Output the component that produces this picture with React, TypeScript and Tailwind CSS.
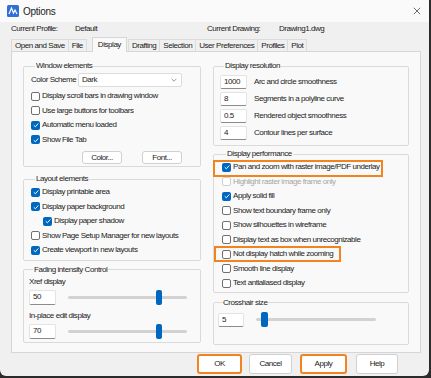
import React from 'react';

type CheckProps = {
    label: string;
    on?: boolean;
    dis?: boolean;
    indent?: boolean;
    mark?: 'first' | 'second';
};

const Box: React.FC<{ on?: boolean; dis?: boolean }> = ({ on, dis }) => {
    if (on) {
        return (
            <span className="w-[9px] h-[9px] shrink-0 rounded-[2px] bg-[#0067c0] flex items-center justify-center">
                <svg viewBox="0 0 10 10" className="w-[8px] h-[8px]">
                    <path d="M2.2 5.3 L4.2 7.2 L7.9 3.1" stroke="white" strokeWidth="1.2" fill="none" />
                </svg>
            </span>
        );
    }
    return (
        <span
            className={`w-[9px] h-[9px] shrink-0 rounded-[2px] border bg-white ${dis ? 'border-[#d0d0d0]' : 'border-[#707070]'}`}
        />
    );
};

const Check: React.FC<CheckProps> = ({ label, on, dis, indent, mark }) => (
    <div className={`relative h-[14.5px] flex items-center gap-[2px] whitespace-nowrap ${indent ? 'pl-[12px]' : ''}`}>
        <Box on={on} dis={dis} />
        <span className={dis ? 'text-[#a6a6a6]' : ''}>{label}</span>
        {mark === 'first' && (
            <span className="absolute left-[-9px] top-0 w-[170px] h-[17px] border-2 border-[#f2841f]" />
        )}
        {mark === 'second' && (
            <span className="absolute left-[-8px] top-[-1px] w-[127px] h-[16px] border-2 border-[#f2841f]" />
        )}
    </div>
);

const Group: React.FC<{ title: string; className?: string; children: React.ReactNode }> = ({ title, className, children }) => (
    <fieldset className={`border border-[#dadada] rounded-[2px] ${className ?? ''}`}>
        <legend className="ml-[4px] px-[1px] h-[10px] leading-[10px]">{title}</legend>
        {children}
    </fieldset>
);

const Field: React.FC<{ value: string; w: string }> = ({ value, w }) => (
    <div className={`${w} h-[14px] bg-white border border-[#e3e3e3] border-b-[#8c8c8c] rounded-[2px] pl-[3px] flex items-center`}>
        {value}
    </div>
);

const Slider: React.FC<{ track: string; thumb: string }> = ({ track, thumb }) => (
    <div className={`relative ${track} h-[3px] bg-[#d2d2d2] rounded-full`}>
        <span className={`absolute top-[-6px] ${thumb} w-[6px] h-[15px] rounded-[2px] bg-[#0067c0]`} />
    </div>
);

const Btn: React.FC<{ label: string; w: string; mark?: boolean }> = ({ label, w, mark }) => (
    <div
        className={`${w} h-[20px] rounded-[3px] bg-white flex items-center justify-center ${mark ? 'border-2 border-[#f2841f]' : 'border border-[#d0d0d0]'}`}
    >
        {label}
    </div>
);

const tabs = ['Open and Save', 'File', 'Display', 'Drafting', 'Selection', 'User Preferences', 'Profiles', 'Plot'];

export default function App() {
    return (
        <div className="w-[431px] h-[378px] bg-[#2b2b2b] overflow-hidden font-['Liberation_Sans',Arial,sans-serif] text-[8px] tracking-[-0.45px] text-[#1b1b1b]">
            <div className="w-[429px] h-[376px] bg-[#f0f0f0] rounded-b-[6px] flex flex-col">
                {/* title bar */}
                <div className="h-[22px] bg-[#fafafa] flex items-center pl-[7px] pr-[8px]">
                    <svg viewBox="0 0 12 12" className="w-[12px] h-[12px]">
                        <rect width="12" height="12" rx="1.5" fill="#2f6fd8" />
                        <path d="M2 9 L4.5 3 L6.5 8 L8 5 L10 9" stroke="white" strokeWidth="1.2" fill="none" />
                    </svg>
                    <span className="ml-[4px] text-[10px] tracking-[-0.3px]">Options</span>
                    <svg viewBox="0 0 10 10" className="ml-auto w-[8px] h-[8px]">
                        <path d="M1 1 L9 9 M9 1 L1 9" stroke="#333" strokeWidth="0.9" />
                    </svg>
                </div>

                {/* profile row */}
                <div className="mt-[2px] h-[10px] leading-[10px] flex pl-[11px] whitespace-nowrap">
                    <span className="w-[64px]">Current Profile:</span>
                    <span className="w-[132px]">Default</span>
                    <span className="w-[72px]">Current Drawing:</span>
                    <span>Drawing1.dwg</span>
                </div>

                {/* tabs */}
                <div className="mt-[2px] h-[15px] flex items-end pl-[12px] whitespace-nowrap">
                    {tabs.map((t) =>
                        t === 'Display' ? (
                            <div
                                key={t}
                                className="h-[15px] ml-[5px] mr-[2px] px-[5px] bg-[#f9f9f9] border border-b-0 border-[#d6d6d6] flex items-center relative top-[1px] z-10"
                            >
                                {t}
                            </div>
                        ) : (
                            <div key={t} className="h-[12px] px-[3px] border border-b-0 border-[#dcdcdc] -ml-px flex items-center">
                                {t}
                            </div>
                        ),
                    )}
                </div>

                {/* panel */}
                <div className="ml-[11px] w-[410px] h-[302px] bg-[#f9f9f9] border border-[#d6d6d6] pt-[9px] pl-[11px] grid grid-cols-[178px_196px] gap-x-[12px] items-start">
                    {/* left column */}
                    <div className="flex flex-col">
                        <Group title="Window elements" className="px-[7px] pb-[2px]">
                            <div className="mt-[2px] flex items-center">
                                <span className="w-[47px]">Color Scheme</span>
                                <div className="w-[104px] h-[14px] bg-white border border-[#dcdcdc] rounded-[2px] flex items-center pl-[3px] pr-[4px]">
                                    <span>Dark</span>
                                    <svg viewBox="0 0 10 6" className="ml-auto w-[6px] h-[4px]">
                                        <path d="M1 1 L5 5 L9 1" stroke="#555" strokeWidth="1" fill="none" />
                                    </svg>
                                </div>
                            </div>
                            <div className="mt-[2px] flex flex-col">
                                <Check label="Display scroll bars in drawing window" />
                                <Check label="Use large buttons for toolbars" />
                                <Check label="Automatic menu loaded" on />
                                <Check label="Show File Tab" on />
                            </div>
                            <div className="mt-[4px] flex pl-[51px] gap-[20px]">
                                <Btn label="Color..." w="w-[40px] !h-[13px]" />
                                <Btn label="Font..." w="w-[40px] !h-[13px]" />
                            </div>
                        </Group>

                        <Group title="Layout elements" className="mt-[7px] px-[7px] pb-[2px]">
                            <div className="mt-[1px] flex flex-col">
                                <Check label="Display printable area" on />
                                <Check label="Display paper background" on />
                                <Check label="Display paper shadow" on indent />
                                <Check label="Show Page Setup Manager for new layouts" />
                                <Check label="Create viewport in new layouts" on />
                            </div>
                        </Group>

                        <Group title="Fading intensity Control" className="mt-[4px] px-[5px] pb-[3px]">
                            <div className="mt-[2px] h-[10px] leading-[10px]">Xref display</div>
                            <div className="mt-[3px] h-[15px] flex items-center gap-[12px]">
                                <Field value="50" w="w-[27px] !h-[15px]" />
                                <Slider track="w-[119px]" thumb="left-[88px]" />
                            </div>
                            <div className="mt-[6px] h-[10px] leading-[10px]">In-place edit display</div>
                            <div className="mt-[3px] h-[15px] flex items-center gap-[12px]">
                                <Field value="70" w="w-[27px] !h-[15px]" />
                                <Slider track="w-[119px]" thumb="left-[88px]" />
                            </div>
                        </Group>
                    </div>

                    {/* right column */}
                    <div className="flex flex-col">
                        <Group title="Display resolution" className="px-[6px] pb-[4px]">
                            <div className="mt-[2px] flex flex-col">
                                {[
                                    ['1000', 'Arc and circle smoothness'],
                                    ['8', 'Segments in a polyline curve'],
                                    ['0.5', 'Rendered object smoothness'],
                                    ['4', 'Contour lines per surface'],
                                ].map(([v, l]) => (
                                    <div key={l} className="h-[17px] flex items-center gap-[7px]">
                                        <Field value={v} w="w-[27px]" />
                                        <span>{l}</span>
                                    </div>
                                ))}
                            </div>
                        </Group>

                        <Group title="Display performance" className="mt-[3px] px-[8px] pb-[1px]">
                            <div className="mt-[1px] flex flex-col">
                                <Check label="Pan and zoom with raster image/PDF underlay" on mark="first" />
                                <Check label="Highlight raster image frame only" dis />
                                <Check label="Apply solid fill" on />
                                <Check label="Show text boundary frame only" />
                                <Check label="Show silhouettes in wireframe" />
                                <Check label="Display text as box when unrecognizable" />
                                <Check label="Not display hatch while zooming" mark="second" />
                                <Check label="Smooth line display" />
                                <Check label="Text antialiased display" />
                            </div>
                        </Group>

                        <Group title="Crosshair size" className="mt-[5px] px-[4px] pb-[17px]">
                            <div className="mt-[5px] h-[14px] flex items-center gap-[12px]">
                                <Field value="5" w="w-[26px]" />
                                <Slider track="w-[120px]" thumb="left-[5px] !w-[7px]" />
                            </div>
                        </Group>
                    </div>
                </div>

                {/* bottom buttons */}
                <div className="mt-[1px] flex pl-[197px]">
                    <Btn label="OK" w="w-[45px]" mark />
                    <div className="ml-[7px]">
                        <Btn label="Cancel" w="w-[43px]" />
                    </div>
                    <div className="ml-[8px]">
                        <Btn label="Apply" w="w-[47px]" mark />
                    </div>
                    <div className="ml-[9px]">
                        <Btn label="Help" w="w-[42px]" />
                    </div>
                </div>
            </div>
        </div>
    );
}
